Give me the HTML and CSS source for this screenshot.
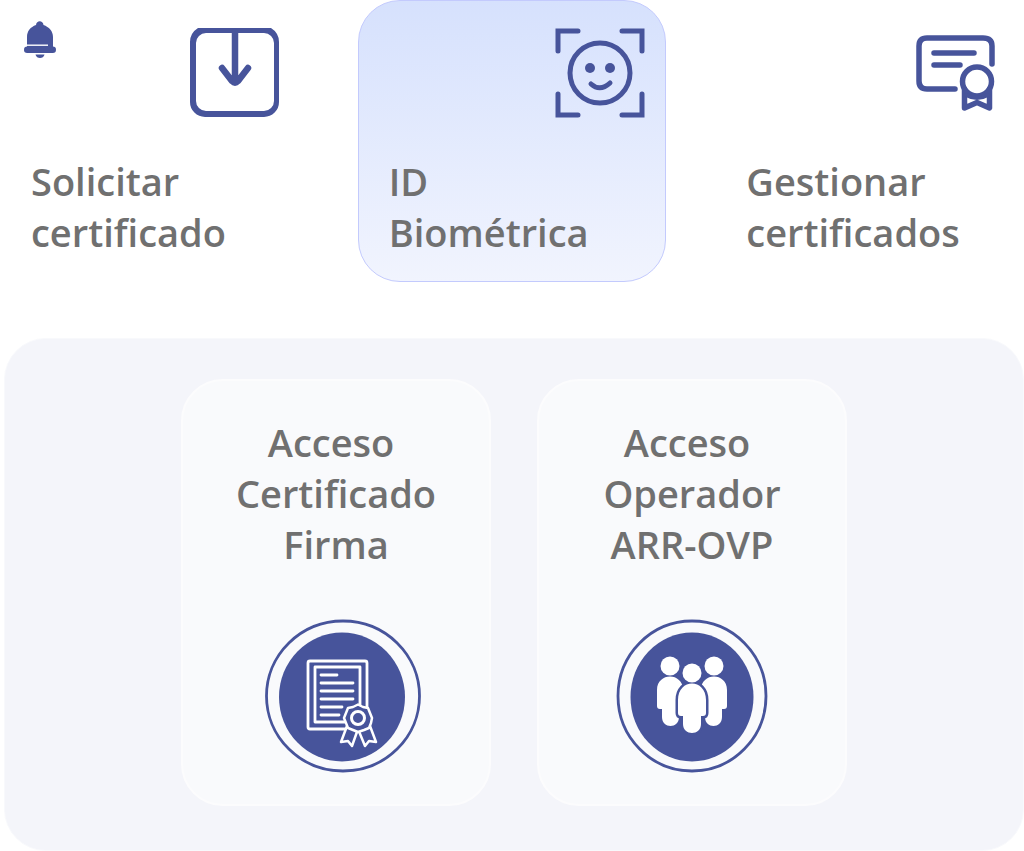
FILE: index.html
```html
<!DOCTYPE html>
<html lang="es">
<head>
    <meta charset="UTF-8">
    <meta name="viewport" content="width=device-width, initial-scale=1.0">
    <title>Certificados</title>
    <link rel="stylesheet" href="styles.css">
</head>
<body>
    <button type="button" class="bell" aria-label="Notificaciones">
        <svg viewBox="0 0 32 38" width="32" height="38">
            <path d="M3 23V16C3 10 6.500 6 12 4C12.500 -1 19 -1 19.500 4C25 6 29 10 29 16V26H3z" fill="#47549b"/>
            <path d="M3 24.200H24" stroke="#fff" stroke-width="1.400"/>
            <rect x="0" y="25.500" width="32" height="6.500" rx="3.200" fill="#47549b"/>
            <path d="M11.500 33.500H20.500C19.500 38.200 12.500 38.200 11.500 33.500z" fill="#47549b"/>
        </svg>
    </button>

    <nav class="menu">
        <a href="#solicitar" class="option">
            <svg class="option-icon" viewBox="0 0 100 100">
                <path d="M2 20Q2 11 10 6H83Q91 11 91 20V80A15 15 0 0 1 76 95H17A15 15 0 0 1 2 80zM8 21V79A10 10 0 0 0 18 89H76A10 10 0 0 0 86 79V21A10 10 0 0 0 76 11H18A10 10 0 0 0 8 21z" class="frame"/>
                <path d="M47 10V60M34 46L44 59Q47 62 50 59L60 46" stroke-width="6.500"/>
            </svg>
            <span>Solicitar<br>certificado</span>
        </a>
        <a href="#biometrica" class="option active">
            <svg class="option-icon" viewBox="0 0 100 100">
                <path d="M13 29V9H33M77 9H97V29M13 72V93H33M77 93H97V72" class="corners"/>
                <circle cx="55" cy="51" r="30"/>
                <circle cx="45" cy="46" r="5" class="dot"/>
                <circle cx="65" cy="46" r="5" class="dot"/>
                <path d="M46 62Q55 70 65 61"/>
            </svg>
            <span>ID<br>Biométrica</span>
        </a>
        <a href="#gestionar" class="option">
            <svg class="option-icon" viewBox="0 0 100 100">
                <path d="M52 67H24Q16 67 16 59V24Q16 16 24 16H80Q89 16 89 24V42M31 31H71M31 43H57" stroke-width="5.500"/>
                <circle cx="74" cy="59.500" r="14.500" stroke-width="5.500"/>
                <path d="M61.500 67V86L74 80.500L86.500 86V67" stroke-width="5.500"/>
                <path d="M63 73Q74 79 85 73" stroke-width="4"/>
            </svg>
            <span>Gestionar<br>certificados</span>
        </a>
    </nav>

    <main class="panel">
        <a href="#firma" class="access">
            <span>Acceso&nbsp;<br>Certificado<br>Firma</span>
            <svg class="access-icon" viewBox="0 0 170 156">
                <ellipse cx="92" cy="78" rx="76.500" ry="75" class="ring"/>
                <ellipse cx="91" cy="79" rx="63" ry="64.500" class="disc"/>
                <g class="lines">
                    <rect x="57" y="43" width="59" height="68" rx="2"/>
                    <rect x="64" y="49" width="45" height="55"/>
                    <path d="M70 57H86M70 65H102M70 73H102M70 81H102M70 89H91M70 97H88"/>
                    <path class="fill" d="M96 108L90 124L97 123L101 128L107 111L114 128L118 123L125 124L119 108z"/>
                    <path class="fill" d="M107 86.500L112 89L117 90L119 95L121 100L120 105L118 110L113 112L107 114L102 112L97 110L95 105L93 100L95 95L97 90L102 89z"/>
                    <circle cx="107" cy="100" r="6.500" stroke-width="3"/>
                </g>
            </svg>
        </a>
        <a href="#operador" class="access">
            <span>Acceso&nbsp;<br>Operador<br>ARR-OVP</span>
            <svg class="access-icon" viewBox="0 0 170 156">
                <ellipse cx="85" cy="78" rx="74" ry="75" class="ring"/>
                <ellipse cx="85" cy="79" rx="61.500" ry="64.500" class="disc"/>
                <g class="people">
                    <circle cx="63" cy="48" r="9.500"/>
                    <circle cx="107" cy="48" r="9.500"/>
                    <path d="M50 72C50 54 76 54 76 72V90H72V99C72 111 55 111 55 99V91H53Q50 91 50 88z"/>
                    <path d="M120 72C120 54 94 54 94 72V90H98V99C98 111 115 111 115 99V91H117Q120 91 120 88z"/>
                    <path class="gap" d="M71 82C71 60 99 60 99 82V95Q99 98 96 98H94V106C94 118 76 118 76 106V98H74Q71 98 71 95z"/>
                    <circle cx="85" cy="55" r="9.500"/>
                    <path d="M71 82C71 60 99 60 99 82V95Q99 98 96 98H94V106C94 118 76 118 76 106V98H74Q71 98 71 95z"/>
                </g>
            </svg>
        </a>
    </main>
</body>
</html>
```

FILE: styles.css
```css
* {
    box-sizing: border-box;
}

body {
    margin: 0;
    background-color: #fff;
    font-family: "Open Sans", "Noto Sans", sans-serif;
    font-size: 38px;
    font-weight: 600;
    line-height: 51px;
    color: #707070;
}

a {
    color: inherit;
    text-decoration: none;
}

svg {
    display: block;
}

.bell {
    position: absolute;
    top: 21px;
    left: 24px;
    padding: 0;
    border: none;
    background: none;
    cursor: pointer;
}

.menu {
    display: grid;
    grid-template-columns: repeat(3, 1fr);
    gap: 49px;
}

.option {
    display: flex;
    flex-direction: column;
    gap: 34px;
    padding: 21px 20px 23px 30px;
    border: 1px solid transparent;
    border-radius: 42px;
}

.option.active {
    background: linear-gradient(#d6e1fd, #f1f4fe);
    border-color: #c3cafd;
}

.option-icon {
    align-self: flex-end;
    width: 100px;
    height: 100px;
    fill: none;
    stroke: #47549b;
    stroke-width: 5;
    stroke-linecap: round;
    stroke-linejoin: round;
}

.option-icon .frame {
    fill: #47549b;
    fill-rule: evenodd;
    stroke: none;
}

.option-icon .corners {
    stroke-linejoin: miter;
}

.option-icon .dot {
    fill: #47549b;
    stroke: none;
}

.panel {
    display: flex;
    justify-content: center;
    gap: 46px;
    margin: 56px 0 0 4px;
    padding: 40px 0 44px;
    background-color: #f4f5fa;
    border: 1px solid #f8f9fc;
    border-radius: 42px;
}

.access {
    display: flex;
    flex-direction: column;
    align-items: center;
    gap: 48px;
    width: 310px;
    padding: 36px 20px 30px;
    background-color: #f9fafc;
    border: 2px solid #fcfcfd;
    border-radius: 42px;
    text-align: center;
}

.access-icon {
    width: 170px;
    height: 156px;
}

.ring {
    fill: none;
    stroke: #47549b;
    stroke-width: 2.8;
}

.disc {
    fill: #47549b;
}

.lines {
    fill: none;
    stroke: #fff;
    stroke-width: 2.8;
    stroke-linecap: round;
    stroke-linejoin: round;
}

.lines .fill {
    fill: #47549b;
    stroke-width: 2.5;
}

.people {
    fill: #fff;
}

.people .gap {
    stroke: #47549b;
    stroke-width: 5;
}
```
